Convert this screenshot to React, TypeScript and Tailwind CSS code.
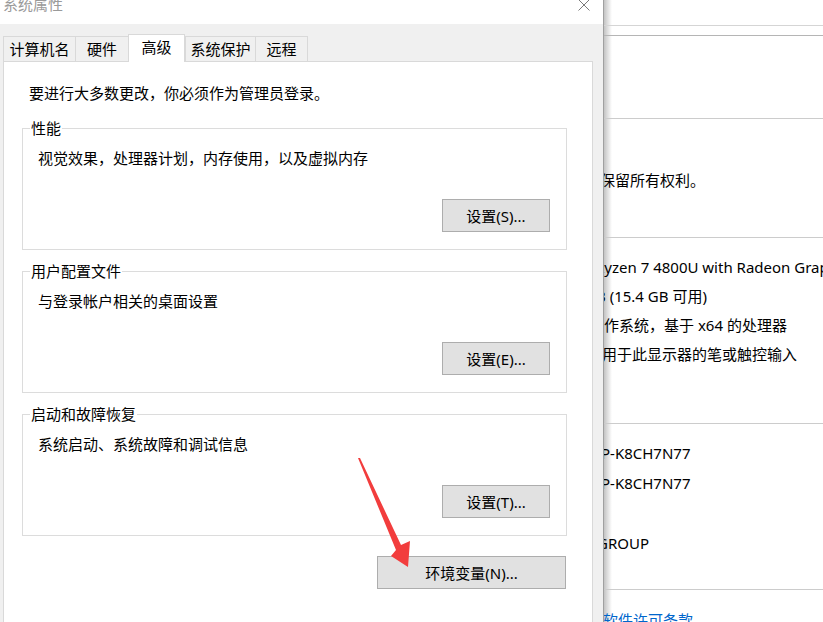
import React from "react";

const font = "font-['Noto_Sans','Noto_Sans_CJK_SC',sans-serif]";

interface TabProps {
  label: string;
  width: string;
  active?: boolean;
  last?: boolean;
}

const Tab: React.FC<TabProps> = ({ label, width, active, last }) => {
  if (active) {
    return (
      <div
        className={`${width} relative z-10 flex h-[28px] items-center justify-center border-x border-t border-[#d9d9d9] bg-white pb-[2px]`}
      >
        {label}
      </div>
    );
  }
  return (
    <div
      className={`${width} mb-px flex h-[25px] items-center justify-center border-l border-t border-[#d9d9d9] ${
        last ? "border-r" : ""
      }`}
    >
      {label}
    </div>
  );
};

interface GroupProps {
  title: string;
  desc: string;
  button: string;
}

const Group: React.FC<GroupProps> = ({ title, desc, button }) => (
  <fieldset className="w-[545px] border border-[#dcdcdc] pb-[17px] pl-[15px] pr-[16px]">
    <legend className="ml-[-8px] px-px leading-[20px]">{title}</legend>
    <div className="mt-[10px] leading-[20px]">{desc}</div>
    <div className="mt-[31px] flex justify-end">
      <button className="h-[33px] w-[108px] border border-[#adadad] bg-[#e1e1e1] leading-[20px]">
        {button}
      </button>
    </div>
  </fieldset>
);

const App: React.FC = () => {
  return (
    <div
      className={`${font} relative flex h-[622px] w-[823px] overflow-hidden bg-white text-[15px] text-black`}
    >
      {/* dialog */}
      <div className="flex h-[622px] w-[604px] shrink-0 flex-col border-r border-[#a0a0a0]">
        <div className="flex h-[24px] shrink-0 items-start justify-between bg-white pl-[3px] pr-[13px]">
          <span className="mt-[-6px] leading-[20px] text-[#9a9a9a]">系统属性</span>
          <svg width="12" height="12" viewBox="0 0 12 12" className="mt-[-1px]">
            <path d="M0.5 0.5 L11.5 11.5 M11.5 0.5 L0.5 11.5" stroke="#7a7a7a" strokeWidth="1" />
          </svg>
        </div>
        <div className="min-h-0 flex-1 overflow-hidden bg-[#f0f0f0] pl-[3px] pr-[10px]">
          <div className="mt-[10px] flex h-[28px] items-end">
            <Tab label="计算机名" width="w-[72px]" />
            <Tab label="硬件" width="w-[53px]" />
            <Tab label="高级" width="w-[57px]" active />
            <Tab label="系统保护" width="w-[70px]" />
            <Tab label="远程" width="w-[53px]" last />
          </div>
          <div className="mt-[-1px] h-[580px] border border-[#d9d9d9] bg-white px-[18px] pt-[21px]">
            <div className="ml-[7px] leading-[20px]">要进行大多数更改，你必须作为管理员登录。</div>
            <div className="mt-[15px] flex flex-col gap-[11px]">
              <Group
                title="性能"
                desc="视觉效果，处理器计划，内存使用，以及虚拟内存"
                button="设置(S)..."
              />
              <Group title="用户配置文件" desc="与登录帐户相关的桌面设置" button="设置(E)..." />
              <Group
                title="启动和故障恢复"
                desc="系统启动、系统故障和调试信息"
                button="设置(T)..."
              />
            </div>
            <div className="mt-[20px] flex w-[545px] justify-end pr-px">
              <button className="h-[33px] w-[189px] border border-[#adadad] bg-[#e1e1e1] leading-[20px]">
                环境变量(N)...
              </button>
            </div>
          </div>
        </div>
      </div>

      {/* window behind */}
      <div className="flex-1 overflow-hidden whitespace-nowrap bg-[linear-gradient(to_right,#c4c4c4,#ffffff)] bg-[length:8px_100%] bg-no-repeat">
        <div className="h-[26px] border-b border-[#d5d5d5]" />
        <div className="h-[10px] border-b border-[#b5b5b5]" />
        <div className="h-[83px] border-b border-[#cccccc]" />
        <div className="h-[119px] border-b border-[#cccccc] pt-[51px]">
          <div className="ml-[-4px] leading-[20px]">保留所有权利。</div>
        </div>
        <div className="h-[186px] border-b border-[#cccccc] pt-[15px] leading-[29px]">
          <div className="ml-[-9px]">Ryzen 7 4800U with Radeon Graphics</div>
          <div className="ml-[-8px]">B (15.4 GB 可用)</div>
          <div>作系统，基于 x64 的处理器</div>
          <div className="ml-[-2px]">用于此显示器的笔或触控输入</div>
        </div>
        <div className="h-[166px] border-b border-[#cccccc] pt-[14px] leading-[30px]">
          <div className="ml-[-3px]">P-K8CH7N77</div>
          <div className="ml-[-3px]">P-K8CH7N77</div>
          <div className="h-[30px]" />
          <div className="ml-[-7px]">GROUP</div>
        </div>
        <div className="pt-[20px] leading-[20px] text-[#0066cc]">
          <div className="ml-[-1px]">软件许可条款</div>
        </div>
      </div>

      {/* red annotation arrow */}
      <svg
        className="pointer-events-none absolute left-0 top-0"
        width="823"
        height="622"
        viewBox="0 0 823 622"
      >
        <polygon
          points="358,458 360,458 401,545 410,541 408,567 391,556 396,550"
          fill="#f23d3d"
        />
      </svg>
    </div>
  );
};

export default App;
